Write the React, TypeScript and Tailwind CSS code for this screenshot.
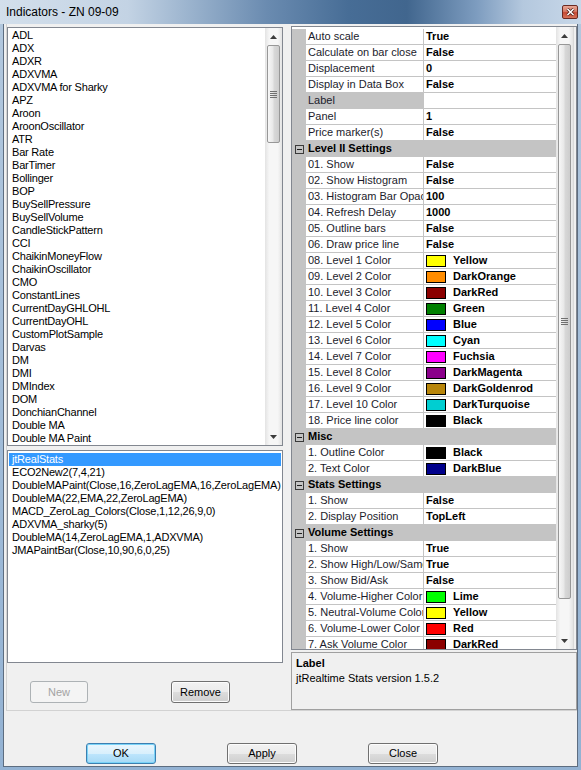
import React from "react";

const indicators = [
  "ADL", "ADX", "ADXR", "ADXVMA", "ADXVMA for Sharky", "APZ", "Aroon", "AroonOscillator", "ATR",
  "Bar Rate", "BarTimer", "Bollinger", "BOP", "BuySellPressure", "BuySellVolume", "CandleStickPattern",
  "CCI", "ChaikinMoneyFlow", "ChaikinOscillator", "CMO", "ConstantLines", "CurrentDayGHLOHL",
  "CurrentDayOHL", "CustomPlotSample", "Darvas", "DM", "DMI", "DMIndex", "DOM", "DonchianChannel",
  "Double MA", "Double MA Paint",
];

const applied = [
  "jtRealStats",
  "ECO2New2(7,4,21)",
  "DoubleMAPaint(Close,16,ZeroLagEMA,16,ZeroLagEMA)",
  "DoubleMA(22,EMA,22,ZeroLagEMA)",
  "MACD_ZeroLag_Colors(Close,1,12,26,9,0)",
  "ADXVMA_sharky(5)",
  "DoubleMA(14,ZeroLagEMA,1,ADXVMA)",
  "JMAPaintBar(Close,10,90,6,0,25)",
];

type Prop = { cat?: string; name?: string; value?: string; color?: string; sel?: boolean };

const props: Prop[] = [
  { name: "Auto scale", value: "True" },
  { name: "Calculate on bar close", value: "False" },
  { name: "Displacement", value: "0" },
  { name: "Display in Data Box", value: "False" },
  { name: "Label", value: "", sel: true },
  { name: "Panel", value: "1" },
  { name: "Price marker(s)", value: "False" },
  { cat: "Level II Settings" },
  { name: "01. Show", value: "False" },
  { name: "02. Show Histogram", value: "False" },
  { name: "03. Histogram Bar Opacity", value: "100" },
  { name: "04. Refresh Delay", value: "1000" },
  { name: "05. Outline bars", value: "False" },
  { name: "06. Draw price line", value: "False" },
  { name: "08. Level 1 Color", value: "Yellow", color: "bg-[#ffff00]" },
  { name: "09. Level 2 Color", value: "DarkOrange", color: "bg-[#ff8c00]" },
  { name: "10. Level 3 Color", value: "DarkRed", color: "bg-[#8b0000]" },
  { name: "11. Level 4 Color", value: "Green", color: "bg-[#008000]" },
  { name: "12. Level 5 Color", value: "Blue", color: "bg-[#0000ff]" },
  { name: "13. Level 6 Color", value: "Cyan", color: "bg-[#00ffff]" },
  { name: "14. Level 7 Color", value: "Fuchsia", color: "bg-[#ff00ff]" },
  { name: "15. Level 8 Color", value: "DarkMagenta", color: "bg-[#8b008b]" },
  { name: "16. Level 9 Color", value: "DarkGoldenrod", color: "bg-[#b8860b]" },
  { name: "17. Level 10 Color", value: "DarkTurquoise", color: "bg-[#00ced1]" },
  { name: "18. Price line color", value: "Black", color: "bg-[#000000]" },
  { cat: "Misc" },
  { name: "1. Outline Color", value: "Black", color: "bg-[#000000]" },
  { name: "2. Text Color", value: "DarkBlue", color: "bg-[#00008b]" },
  { cat: "Stats Settings" },
  { name: "1. Show", value: "False" },
  { name: "2. Display Position", value: "TopLeft" },
  { cat: "Volume Settings" },
  { name: "1. Show", value: "True" },
  { name: "2. Show High/Low/Same", value: "True" },
  { name: "3. Show Bid/Ask", value: "False" },
  { name: "4. Volume-Higher Color", value: "Lime", color: "bg-[#00ff00]" },
  { name: "5. Neutral-Volume Color", value: "Yellow", color: "bg-[#ffff00]" },
  { name: "6. Volume-Lower Color", value: "Red", color: "bg-[#ff0000]" },
  { name: "7. Ask Volume Color", value: "DarkRed", color: "bg-[#8b0000]" },
];

function Arrow({ down }: { down?: boolean }) {
  return (
    <div className="h-[17px] shrink-0 flex items-center justify-center">
      <svg width="7" height="4" viewBox="0 0 7 4">
        <path d={down ? "M0 0H7L3.5 4Z" : "M0 4H7L3.5 0Z"} fill="#3c3c3c" />
      </svg>
    </div>
  );
}

function ScrollBar({ thumb }: { thumb: string }) {
  return (
    <div className="w-[17px] h-full shrink-0 flex flex-col bg-[linear-gradient(90deg,#e3e3e3,#f6f6f6_25%,#f6f6f6_75%,#e3e3e3)]">
      <Arrow />
      <div
        className={
          "mx-[2px] shrink-0 rounded-[2px] border border-[#979797] bg-[linear-gradient(90deg,#f7f7f7,#e8e8e8_45%,#d8d8d8_55%,#cdcdcd)] flex flex-col items-center justify-center gap-[1px] " +
          thumb
        }
      >
        <div className="w-[7px] h-[1px] bg-[#707070]" />
        <div className="w-[7px] h-[1px] bg-[#707070]" />
        <div className="w-[7px] h-[1px] bg-[#707070]" />
        <div className="w-[7px] h-[1px] bg-[#707070]" />
      </div>
      <div className="flex-1" />
      <Arrow down />
    </div>
  );
}

function WinButton({ label, className, disabled, def }: { label: string; className: string; disabled?: boolean; def?: boolean }) {
  const look = disabled
    ? "border-[#adb2b5] bg-[#f4f4f4] text-[#a3a3a3]"
    : def
    ? "border-[#3c7fb1] bg-[linear-gradient(180deg,#eaf6fd,#d9f0fc_50%,#bee6fd_50%,#a7d9f5)] shadow-[inset_0_0_0_1px_#7ad3f7] text-black"
    : "border-[#707070] bg-[linear-gradient(180deg,#f2f2f2,#ebebeb_50%,#dddddd_50%,#cfcfcf)] shadow-[inset_0_0_0_1px_#fcfcfc] text-black";
  return (
    <div className={"rounded-[3px] border flex items-center justify-center text-[11px] " + look + " " + className}>
      {label}
    </div>
  );
}

export default function App() {
  return (
    <div className="w-[581px] h-[770px] overflow-hidden bg-[linear-gradient(180deg,#b3c8de,#93b2d3)] font-['Liberation_Sans',Arial,sans-serif] text-black">
      {/* Title bar */}
      <div className="h-[24px] flex items-center bg-[linear-gradient(90deg,#d3dfeb_0%,#c3d3e4_22%,#9db5cf_32%,#6a8bb0_46%,#476d96_60%,#41668e_70%,#7d9cbf_82%,#b4c8de_90%,#c8d8e9_100%)]">
        <span className="pl-[6px] text-[12px] text-black">Indicators - ZN 09-09</span>
        <div className="ml-auto mr-[3px] w-[16px] h-[14px] rounded-[2px] border border-[#6b2a22] bg-[linear-gradient(180deg,#e9a896,#d77a66_45%,#c64a35_55%,#d6735a)] flex items-center justify-center">
          <svg width="9" height="8" viewBox="0 0 9 8">
            <path d="M1.5 1L7.5 7M7.5 1L1.5 7" stroke="#4a1a14" strokeWidth="3" />
            <path d="M1.5 1L7.5 7M7.5 1L1.5 7" stroke="#ffffff" strokeWidth="1.6" />
          </svg>
        </div>
      </div>

      {/* Client area */}
      <div className="mx-[3px] h-[743px] border-x border-b border-[#5d6d80] bg-[#f0f0f0] flex flex-col">
        <div className="ml-[2px] h-[687px] border-l border-b border-[#d2d2d2] flex">
          {/* Left column */}
          <div className="w-[280px] pt-[3px] flex flex-col">
            <div className="w-[276px] h-[419px] border border-[#828790] bg-white flex">
              <div className="flex-1 pt-[1px] overflow-hidden">
                {indicators.map((n) => (
                  <div key={n} className="h-[13px] leading-[13px] pl-[4px] text-[11px] tracking-[-0.2px] whitespace-nowrap">
                    {n}
                  </div>
                ))}
              </div>
              <ScrollBar thumb="h-[98px]" />
            </div>
            <div className="mt-[4px] w-[276px] h-[213px] border border-[#828790] bg-white px-[1px] pt-[2px] overflow-hidden">
              {applied.map((n, i) => (
                <div
                  key={n}
                  className={
                    "h-[13px] leading-[13px] pl-[3px] text-[11px] tracking-[-0.2px] whitespace-nowrap " +
                    (i === 0 ? "bg-[#3399ff] text-white" : "")
                  }
                >
                  {n}
                </div>
              ))}
            </div>
            <div className="mt-[18px] pl-[23px] flex gap-[83px]">
              <WinButton label="New" disabled className="w-[58px] h-[22px]" />
              <WinButton label="Remove" className="w-[59px] h-[22px]" />
            </div>
          </div>

          {/* Right column */}
          <div className="w-[290px] pl-[4px] pt-[2px] flex flex-col">
            <div className="h-[624px] border border-[#828790] bg-white flex overflow-hidden">
              <div className="w-[264px] pt-[2px] text-[11px] overflow-hidden">
                {props.map((p, i) =>
                  p.cat ? (
                    <div key={i} className="h-[16px] flex bg-[#c4c4c4]">
                      <div className="w-[14px] shrink-0 flex items-center justify-center">
                        <div className="w-[9px] h-[9px] border border-[#3a3a3a] flex items-center justify-center">
                          <div className="w-[5px] h-[1px] bg-[#1e1e1e]" />
                        </div>
                      </div>
                      <div className="pl-[2px] leading-[15px] font-bold whitespace-nowrap">{p.cat}</div>
                    </div>
                  ) : (
                    <div key={i} className="h-[16px] flex">
                      <div className="w-[14px] shrink-0 bg-[#c4c4c4]" />
                      <div
                        className={
                          "w-[118px] shrink-0 border-b border-r border-[#c4c4c4] pl-[2px] leading-[15px] whitespace-nowrap overflow-hidden text-[#1c1c2c] " +
                          (p.sel ? "bg-[#c4c4c4]" : "bg-white")
                        }
                      >
                        {p.name}
                      </div>
                      <div className="flex-1 border-b border-[#c4c4c4] pl-[2px] flex items-center font-bold whitespace-nowrap overflow-hidden">
                        {p.color && (
                          <div className={"w-[20px] h-[12px] border border-black shrink-0 mr-[7px] " + p.color} />
                        )}
                        <span className="leading-[15px]">{p.value}</span>
                      </div>
                    </div>
                  )
                )}
              </div>
              <ScrollBar thumb="h-[555px]" />
              <div className="flex-1 border-l border-[#d8d8d8] bg-[#f0f0f0]" />
            </div>
            <div className="mt-[2px] h-[58px] border border-[#a0a0a0] bg-[#f0f0f0] pl-[4px] pt-[3px] text-[11px] leading-[15px]">
              <div className="font-bold">Label</div>
              <div>jtRealtime Stats version 1.5.2</div>
            </div>
          </div>
        </div>

        {/* Dialog buttons */}
        <div className="mt-[32px] pl-[82px] flex gap-[71px]">
          <WinButton label="OK" def className="w-[70px] h-[21px]" />
          <WinButton label="Apply" className="w-[70px] h-[21px]" />
          <WinButton label="Close" className="w-[70px] h-[21px]" />
        </div>
      </div>
    </div>
  );
}
